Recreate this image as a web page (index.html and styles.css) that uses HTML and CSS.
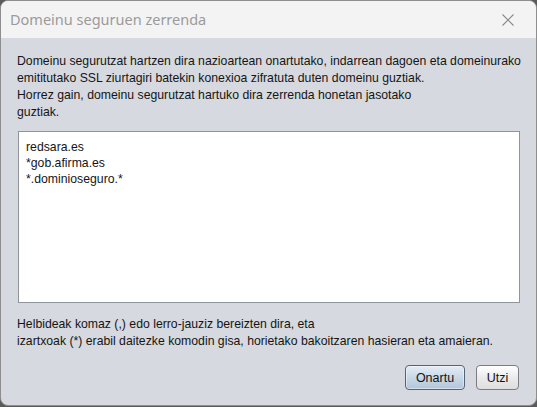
FILE: index.html
```html
<!DOCTYPE html>
<html>
<head>
<meta charset="utf-8">
<link rel="stylesheet" href="styles.css">
</head>
<body>
<div class="window">
  <div class="titlebar">
    <span class="title">Domeinu seguruen zerrenda</span>
    <svg class="close" width="12" height="12" viewBox="0 0 12 12"><path d="M0.5 0.5 L11.5 11.5 M11.5 0.5 L0.5 11.5" stroke="#8a8a8a" stroke-width="1.1" fill="none"/></svg>
  </div>
  <div class="content">
    <p class="intro">Domeinu segurutzat hartzen dira nazioartean onartutako, indarrean dagoen eta domeinurako<br>emititutako SSL ziurtagiri batekin konexioa zifratuta duten domeinu guztiak.<br>Horrez gain, domeinu segurutzat hartuko dira zerrenda honetan jasotako<br>guztiak.</p>
    <div class="textarea">redsara.es<br>*gob.afirma.es<br>*.dominioseguro.*</div>
    <p class="hint">Helbideak komaz (,) edo lerro-jauziz bereizten dira, eta<br>izartxoak (*) erabil daitezke komodin gisa, horietako bakoitzaren hasieran eta amaieran.</p>
    <div class="buttons">
      <button class="btn default">Onartu</button>
      <button class="btn plain">Utzi</button>
    </div>
  </div>
</div>
</body>
</html>
```
FILE: styles.css
```css
html, body {
  margin: 0;
  padding: 0;
  width: 537px;
  height: 407px;
  background: #5a5a5a;
  overflow: hidden;
}
.window {
  box-sizing: border-box;
  width: 537px;
  height: 406px;
  border: 1px solid #8e8e8e;
  border-radius: 8px;
  overflow: hidden;
  display: flex;
  flex-direction: column;
  background: #d6d9df;
}
.titlebar {
  height: 37px;
  flex: none;
  background: #f3f3f3;
  display: flex;
  align-items: center;
  justify-content: space-between;
  padding: 0 22px 0 9px;
}
.title {
  font-family: "Noto Sans", "Open Sans", sans-serif;
  font-size: 14.5px;
  color: #9b9b9b;
  margin-top: -2px;
}
.close {
  display: block;
}
.content {
  flex: 1;
  display: flex;
  flex-direction: column;
  padding: 0 10px 0 16px;
  font-family: "Liberation Sans", Arial, sans-serif;
  font-size: 12.25px;
  color: #151515;
  white-space: nowrap;
}
.intro {
  margin: 15px 0 0 0;
  line-height: 17px;
}
.textarea {
  margin: 10px 6px 0 1px;
  background: #fff;
  border: 1px solid #8f949a;
  padding: 7px 7px;
  box-sizing: border-box;
  height: 172px;
  line-height: 16px;
}
.hint {
  margin: 13px 0 0 0;
  line-height: 17px;
}
.buttons {
  margin: 15px 7px 0 0;
  display: flex;
  justify-content: flex-end;
  gap: 11px;
}
.btn {
  font-family: "Liberation Sans", Arial, sans-serif;
  font-size: 12.5px;
  color: #111;
  height: 25px;
  padding: 0;
  border: 1px solid #7a7d82;
  border-radius: 4px;
  background: linear-gradient(#ffffff, #ebebeb 50%, #dedede);
}
.btn.default {
  width: 60px;
  border-color: #53637a;
  background: linear-gradient(#e3edf6, #c9d8e7 50%, #b3c6da);
  box-shadow: inset 0 0 0 1px rgba(255,255,255,0.45);
}
.btn.plain {
  width: 43px;
}
```
